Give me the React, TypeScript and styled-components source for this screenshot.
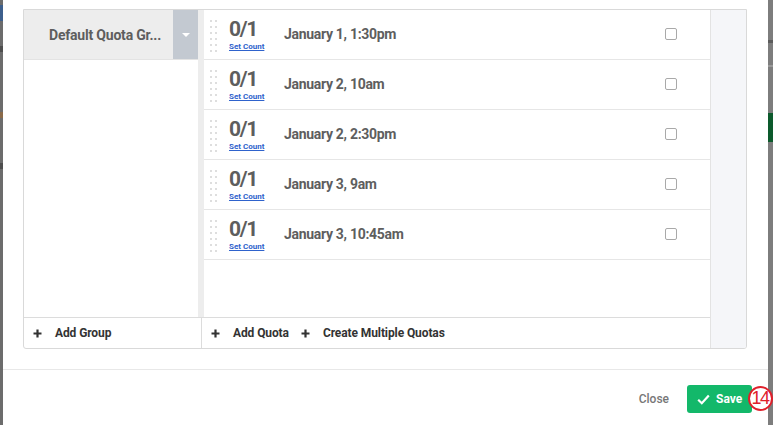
import React from "react";
import styled, { createGlobalStyle } from "styled-components";

const Global = createGlobalStyle`
  html, body { margin: 0; padding: 0; background: #7a7a7a; }
  body { font-family: Roboto, "Liberation Sans", Arial, sans-serif; }
  * { box-sizing: border-box; }
`;

const Page = styled.div`
  display: flex;
  height: 425px;
  width: 773px;
  overflow: hidden;
`;

const BackdropLeft = styled.div`
  width: 3px;
  background: #6c6c6c;
  display: flex;
  flex-direction: column;
`;

const BackdropBit = styled.div<{ $top: number; $h: number; $c: string }>`
  margin-top: ${(p) => p.$top}px;
  height: ${(p) => p.$h}px;
  background: ${(p) => p.$c};
`;

const BackdropRight = styled.div`
  width: 5px;
  background: #7d7d7d;
  display: flex;
  flex-direction: column;
`;

const Modal = styled.div`
  flex: 1;
  background: #fff;
  display: flex;
  flex-direction: column;
`;

const Content = styled.div`
  padding: 9px 21px 0 20px;
`;

const Box = styled.div`
  height: 340px;
  border: 1px solid #d9d9d9;
  border-radius: 0 0 3px 3px;
  display: flex;
  overflow: hidden;
`;

const Main = styled.div`
  flex: 1;
  display: flex;
  flex-direction: column;
  border-right: 1px solid #e3e3e3;
`;

const Gutter = styled.div`
  width: 35px;
  background: #f5f6f9;
`;

const Body = styled.div`
  flex: 1;
  display: flex;
`;

const LeftCol = styled.div`
  width: 174px;
  display: flex;
  flex-direction: column;
`;

const GroupHeader = styled.div`
  height: 50px;
  display: flex;
  background: #ededed;
  border-bottom: 1px solid #e3e3e3;
`;

const GroupName = styled.div`
  flex: 1;
  display: flex;
  align-items: center;
  padding-left: 25px;
  font-size: 14px;
  font-weight: 700;
  color: #5e5e5e;
  white-space: nowrap;
  letter-spacing: -0.2px;
`;

const DropBtn = styled.div`
  width: 25px;
  background: #c3c9d1;
  display: flex;
  align-items: center;
  justify-content: center;
`;

const Caret = styled.div`
  width: 0;
  height: 0;
  border-left: 4px solid transparent;
  border-right: 4px solid transparent;
  border-top: 4px solid #fff;
`;

const Strip = styled.div`
  width: 6px;
  background: #ededed;
`;

const List = styled.div`
  flex: 1;
  display: flex;
  flex-direction: column;
`;

const Row = styled.div`
  height: 50px;
  display: flex;
  align-items: center;
  border-bottom: 1px solid #e6e6e6;
  padding-left: 6px;
  padding-right: 33px;
`;

const Dots = styled.div`
  display: grid;
  grid-template-columns: 2px 2px;
  column-gap: 3px;
  row-gap: 4px;
  align-self: flex-start;
  margin-top: 10px;
`;

const Dot = styled.span`
  width: 2px;
  height: 2px;
  background: #dedede;
`;

const Count = styled.div`
  display: flex;
  flex-direction: column;
  margin-left: 12px;
  width: 55px;
  align-self: flex-start;
  padding-top: 9px;
`;

const CountNum = styled.div`
  font-size: 21px;
  font-weight: 700;
  color: #5e5e5e;
  line-height: 21px;
  letter-spacing: -1.3px;
`;

const SetCount = styled.a`
  font-size: 8px;
  font-weight: 700;
  color: #2f63cc;
  text-decoration: underline;
  line-height: 10px;
  margin-top: 2px;
  white-space: nowrap;
`;

const Title = styled.div`
  flex: 1;
  font-size: 14px;
  font-weight: 700;
  color: #5e5e5e;
  margin-top: -2px;
  letter-spacing: -0.3px;
`;

const Check = styled.span`
  width: 12px;
  height: 12px;
  border: 1px solid #a9a9a9;
  border-radius: 2px;
  background: #fff;
  margin-top: -1px;
`;

const FooterBar = styled.div`
  height: 31px;
  display: flex;
  border-top: 1px solid #dcdcdc;
`;

const FootCell = styled.div<{ $w?: number }>`
  ${(p) => (p.$w ? `width: ${p.$w}px; border-right: 1px solid #dcdcdc;` : "flex: 1;")}
  display: flex;
  align-items: center;
  padding-left: 9px;
`;

const FootAction = styled.div`
  display: flex;
  align-items: center;
  font-size: 12px;
  font-weight: 700;
  color: #333;
  margin-right: 12px;
  letter-spacing: -0.1px;
`;

const PlusIcon = styled.svg`
  width: 9px;
  height: 9px;
  margin-right: 13px;
`;

const Divider = styled.div`
  margin-top: 20px;
  height: 1px;
  background: #e8e8e8;
`;

const ModalFooter = styled.div`
  display: flex;
  justify-content: flex-end;
  align-items: center;
  padding: 15px 16px 0 0;
`;

const CloseBtn = styled.div`
  font-size: 12px;
  font-weight: 500;
  color: #777;
  margin-right: 18px;
`;

const SaveBtn = styled.div`
  position: relative;
  height: 28px;
  width: 65px;
  background: #13b86a;
  border-radius: 3px;
  display: flex;
  align-items: center;
  padding-left: 10px;
  color: #fff;
  font-size: 12px;
  font-weight: 700;
`;

const CheckIcon = styled.svg`
  width: 13px;
  height: 11px;
  margin-right: 6px;
`;

const Badge = styled.div`
  position: absolute;
  left: 61px;
  top: 1px;
  width: 25px;
  height: 25px;
  border-radius: 50%;
  border: 2px solid #e0202b;
  background: #fff;
  color: #e0202b;
  font-size: 18px;
  font-weight: 400;
  display: flex;
  align-items: center;
  justify-content: center;
  letter-spacing: -1.5px;
  padding-right: 1px;
  font-family: "Liberation Sans", Arial, sans-serif;
`;

const quotas = [
  "January 1, 1:30pm",
  "January 2, 10am",
  "January 2, 2:30pm",
  "January 3, 9am",
  "January 3, 10:45am",
];

const Plus = () => (
  <PlusIcon viewBox="0 0 9 9">
    <path d="M4.5 0.5v8M0.5 4.5h8" stroke="#333" strokeWidth="2.2" />
  </PlusIcon>
);

export default function App() {
  return (
    <>
      <Global />
      <Page>
        <BackdropLeft>
          <BackdropBit $top={5} $h={16} $c="#3d5f8c" />
          <BackdropBit $top={25} $h={6} $c="#4e4e4e" />
          <BackdropBit $top={60} $h={6} $c="#8a6a4a" />
          <BackdropBit $top={45} $h={6} $c="#4e4e4e" />
        </BackdropLeft>
        <Modal>
          <Content>
            <Box>
              <Main>
                <Body>
                  <LeftCol>
                    <GroupHeader>
                      <GroupName>Default Quota Gr...</GroupName>
                      <DropBtn>
                        <Caret />
                      </DropBtn>
                    </GroupHeader>
                  </LeftCol>
                  <Strip />
                  <List>
                    {quotas.map((q) => (
                      <Row key={q}>
                        <Dots>
                          {Array.from({ length: 12 }).map((_, i) => (
                            <Dot key={i} />
                          ))}
                        </Dots>
                        <Count>
                          <CountNum>0/1</CountNum>
                          <SetCount>Set Count</SetCount>
                        </Count>
                        <Title>{q}</Title>
                        <Check />
                      </Row>
                    ))}
                  </List>
                </Body>
                <FooterBar>
                  <FootCell $w={178}>
                    <FootAction>
                      <Plus />
                      Add Group
                    </FootAction>
                  </FootCell>
                  <FootCell>
                    <FootAction>
                      <Plus />
                      Add Quota
                    </FootAction>
                    <FootAction>
                      <Plus />
                      Create Multiple Quotas
                    </FootAction>
                  </FootCell>
                </FooterBar>
              </Main>
              <Gutter />
            </Box>
          </Content>
          <Divider />
          <ModalFooter>
            <CloseBtn>Close</CloseBtn>
            <SaveBtn>
              <CheckIcon viewBox="0 0 13 11">
                <path d="M1.2 5.8l3.6 3.4L11.8 1.5" fill="none" stroke="#fff" strokeWidth="2.2" />
              </CheckIcon>
              Save
              <Badge>14</Badge>
            </SaveBtn>
          </ModalFooter>
        </Modal>
        <BackdropRight>
          <BackdropBit $top={40} $h={3} $c="#5c5c5c" />
          <BackdropBit $top={22} $h={2} $c="#999" />
          <BackdropBit $top={46} $h={29} $c="#0c5a2c" />
        </BackdropRight>
      </Page>
    </>
  );
}
